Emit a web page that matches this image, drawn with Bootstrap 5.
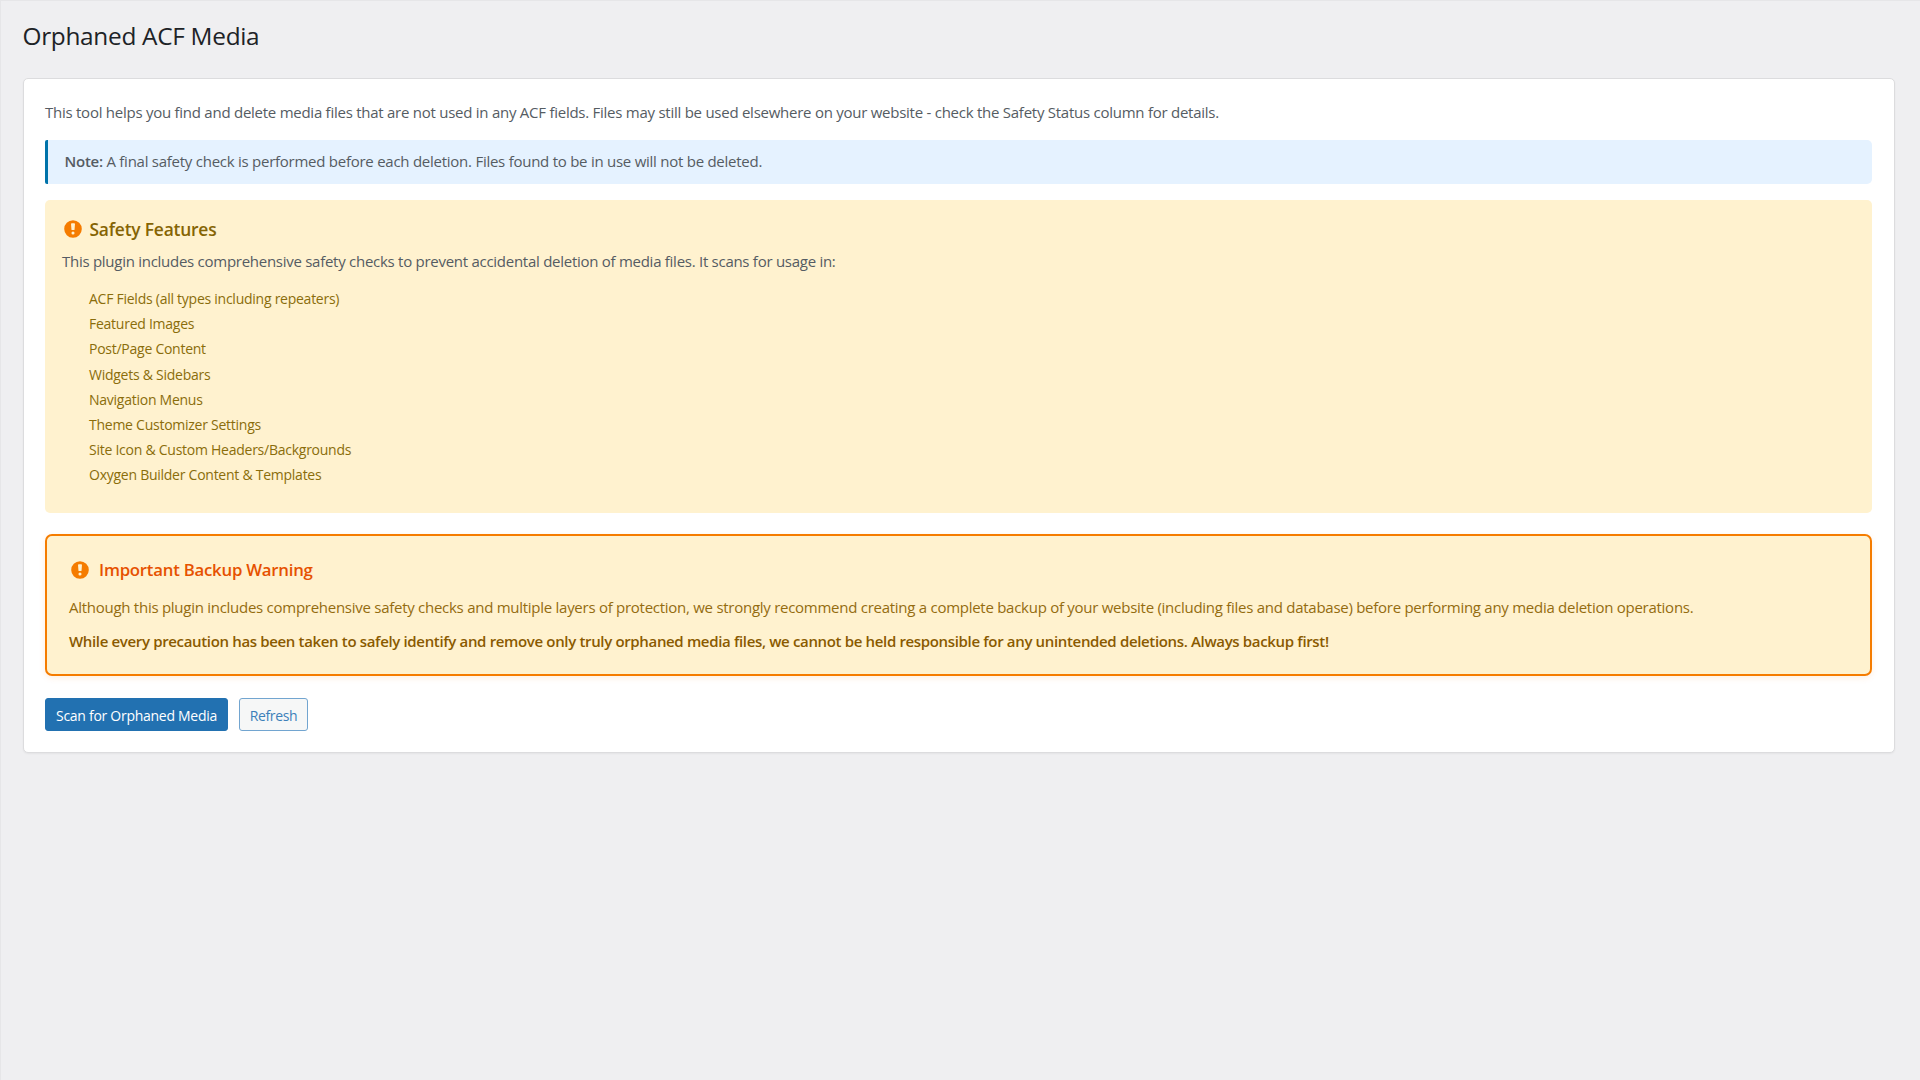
<!DOCTYPE html>
<html lang="en">
<head>
<meta charset="utf-8">
<meta name="viewport" content="width=device-width, initial-scale=1">
<title>Orphaned ACF Media</title>
<link rel="stylesheet" href="https://cdn.jsdelivr.net/npm/bootstrap@5.3.0/dist/css/bootstrap.min.css">
<style>
  body { font-family: "Open Sans", "Noto Sans", sans-serif; font-size: 15px; line-height: 24px; letter-spacing: -.255px; color: #555c63; background: #efeff1; border-top: 1px solid #e6e6e8; border-left: 1px solid #e6e6e8; }
  .page-wrap { padding: 21px 25px 0 22px; }
  .page-title { font-size: 24.4px; line-height: 28px; font-weight: 400; letter-spacing: -.3px; color: #1d2327; margin: 0 0 28px -.5px; }
  .panel { padding: 21px 22px 21px 21px; border: 1px solid #dcdcde; border-radius: 5px; box-shadow: 0 1px 2px rgba(0,0,0,.05); }
  .intro { margin-bottom: 16px; }
  .note-box { height: 43.5px; padding: 0 0 1px 16.5px; background: #e5f2ff; border-left: 3.5px solid #0073aa; border-radius: 2px 5px 5px 2px; margin-bottom: 16.5px; }
  .note-box strong { font-weight: 600; }
  .safety-box { height: 313px; padding: 17px; background: #fff2cf; border-radius: 5px; margin-bottom: 21px; }
  .box-title { line-height: 24px; font-weight: 600; }
  .safety-title { font-size: 17.4px; letter-spacing: -.2px; color: #856404; gap: 5.5px; margin-bottom: 8px; }
  .safety-text { letter-spacing: -.27px; margin-bottom: 13px; }
  .features { font-size: 14px; line-height: 25.2px; padding-left: 27px; color: #8a6d0b; }
  .warn-box { height: 142px; padding: 22px 22px; background: #fff2cf; border: 2px solid #f57c00; border-radius: 7px; box-shadow: 0 2px 6px rgba(245,124,0,.12); margin-bottom: 21px; color: #946c10; }
  .warn-title { font-size: 16.8px; letter-spacing: -.24px; color: #e65100; gap: 8.5px; margin: 0 0 13px -.5px; }
  .warn-text { letter-spacing: -.268px; margin-bottom: 10px; }
  .warn-strong { font-weight: 600; letter-spacing: -.345px; color: #8a5a00; }
  .alert-icon { width: 22px; height: 22px; fill: #f57c00; flex: none; margin-top: -1px; }
  .action-row { gap: 11px; padding-top: .5px; }
  .btn-wp { height: 33.5px; padding: 1px 0 0; font-size: 14px; line-height: 31px; border-radius: 3px; letter-spacing: -.28px; }
  .btn-scan { width: 183px; color: #fff; background: #2271b1; border-color: #2271b1; }
  .btn-refresh { width: 69px; color: #3c80ba; background: #f6f7f7; border-color: #72a5d0; letter-spacing: -.4px; }
</style>
</head>
<body class="min-vh-100">
<svg class="d-none" aria-hidden="true">
  <symbol id="alert-circle" viewBox="0 0 20 20">
    <path fill-rule="evenodd" d="M10 2a8 8 0 1 1 0 16a8 8 0 0 1 0-16zM8.900 4.700h2.200c.4 0 .7.3.7.7l-.4 5c0 .3-.2.5-.5.5H9.100c-.3 0-.5-.2-.5-.5l-.4-5c0-.4.3-.7.7-.7zM10 12.300a1.400 1.400 0 1 0 0 2.800a1.400 1.400 0 0 0 0-2.800z"/>
  </symbol>
</svg>
<main class="page-wrap">
  <h1 class="page-title">Orphaned ACF Media</h1>
  <section class="panel bg-white">
    <p class="intro">This tool helps you find and delete media files that are not used in any ACF fields. Files may still be used elsewhere on your website - check the Safety Status column for details.</p>
    <div class="note-box d-flex align-items-center">
      <div><strong>Note:</strong> A final safety check is performed before each deletion. Files found to be in use will not be deleted.</div>
    </div>
    <div class="safety-box">
      <h2 class="box-title safety-title d-flex align-items-center"><svg class="alert-icon"><use href="#alert-circle"/></svg>Safety Features</h2>
      <p class="safety-text">This plugin includes comprehensive safety checks to prevent accidental deletion of media files. It scans for usage in:</p>
      <ul class="features list-unstyled mb-0">
        <li>ACF Fields (all types including repeaters)</li>
        <li>Featured Images</li>
        <li>Post/Page Content</li>
        <li>Widgets &amp; Sidebars</li>
        <li>Navigation Menus</li>
        <li>Theme Customizer Settings</li>
        <li>Site Icon &amp; Custom Headers/Backgrounds</li>
        <li>Oxygen Builder Content &amp; Templates</li>
      </ul>
    </div>
    <div class="warn-box">
      <h2 class="box-title warn-title d-flex align-items-center"><svg class="alert-icon"><use href="#alert-circle"/></svg>Important Backup Warning</h2>
      <p class="warn-text">Although this plugin includes comprehensive safety checks and multiple layers of protection, we strongly recommend creating a complete backup of your website (including files and database) before performing any media deletion operations.</p>
      <p class="warn-strong mb-0">While every precaution has been taken to safely identify and remove only truly orphaned media files, we cannot be held responsible for any unintended deletions. Always backup first!</p>
    </div>
    <div class="action-row d-flex">
      <button type="button" class="btn btn-wp btn-scan text-nowrap">Scan for Orphaned Media</button>
      <button type="button" class="btn btn-wp btn-refresh">Refresh</button>
    </div>
  </section>
</main>
<script src="https://cdn.jsdelivr.net/npm/bootstrap@5.3.0/dist/js/bootstrap.bundle.min.js"></script>
</body>
</html>
